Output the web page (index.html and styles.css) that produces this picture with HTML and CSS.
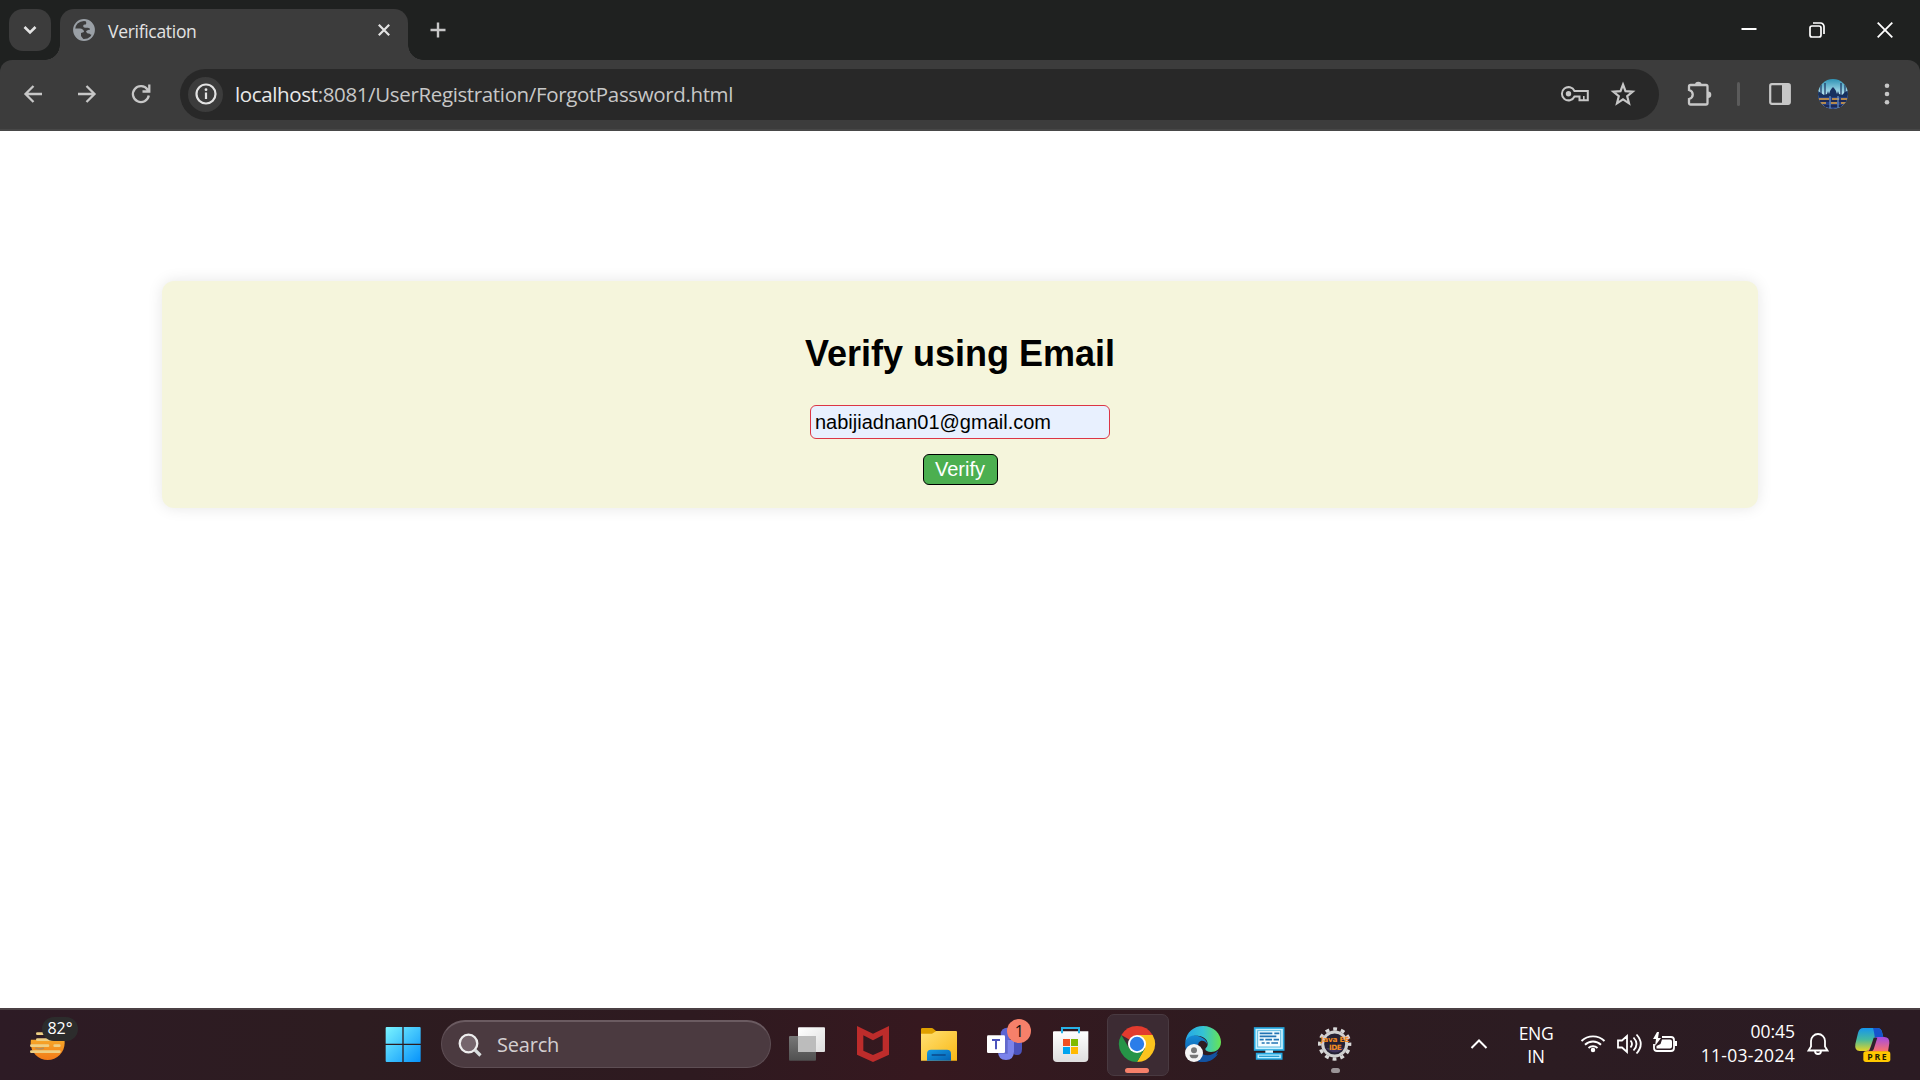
FILE: index.html
```html
<!DOCTYPE html>
<html lang="en">
<head>
<meta charset="utf-8">
<title>Verification</title>
<link rel="stylesheet" href="styles.css">
</head>
<body>
<header class="tabstrip">
  <button class="tab-search" aria-label="Search tabs"><svg width="14" height="10" viewBox="0 0 14 10"><path d="M1.500 2L7 7.500 12.500 2" fill="none" stroke="#e3e3e3" stroke-width="2.600"/></svg></button>
  <div class="tab">
    <svg class="favicon" width="22" height="22" viewBox="0 0 22 22"><circle cx="11" cy="11" r="10" fill="#3c3c3c" stroke="#9aa0a6" stroke-width="1.800"/><path d="M13 1.500l5 1.500 3 6v5.500l-3 1.500c-1-2-3-1-4-2l-1-1.500c1-2 4-1 4-2.500-1-2-3-1-6-1.500-1.500-1-1-3 1-3s1-2 1-4zM1 9.500h6c2 0 4 1.500 4 3.500l-3 1v3l3 4-5-1-4-5z" fill="#9aa0a6"/></svg>
    <span class="tab-title">Verification</span>
    <svg class="tab-close" width="12" height="12" viewBox="0 0 12 12"><path d="M.8.8l10.400 10.400M11.200.8L.8 11.200" stroke="#e3e3e3" stroke-width="2.200"/></svg>
  </div>
  <svg class="new-tab" width="16" height="16" viewBox="0 0 16 16"><path d="M8 .5v15M.5 8h15" stroke="#c7c7c7" stroke-width="2.400"/></svg>
  <div class="window-controls">
    <svg width="16" height="16" viewBox="0 0 16 16"><path d="M.5 7h15" stroke="#fff" stroke-width="2"/></svg>
    <svg width="16" height="16" viewBox="0 0 16 16" fill="none" stroke="#fff" stroke-width="1.700"><rect x="1" y="4" width="11" height="11" rx="2"/><path d="M4 1h7.500a3.500 3.500 0 0 1 3.500 3.500V12"/></svg>
    <svg width="16" height="16" viewBox="0 0 16 16"><path d="M.7.7l14.600 14.600M15.300.7L.7 15.300" stroke="#fff" stroke-width="1.800"/></svg>
  </div>
</header>
<nav class="toolbar-wrap">
  <div class="toolbar">
    <div class="nav-buttons">
      <svg width="20" height="20" viewBox="0 0 20 20" fill="none" stroke="#c7c7c7" stroke-width="2.300"><path d="M19 10H3M10.500 2L2.500 10l8 8"/></svg>
      <svg width="20" height="20" viewBox="0 0 20 20" fill="none" stroke="#c7c7c7" stroke-width="2.300"><path d="M1 10h16M9.500 2l8 8-8 8"/></svg>
      <svg width="20" height="20" viewBox="0 0 20 20" fill="none" stroke="#c7c7c7" stroke-width="2.300"><path d="M17.800 11.500A8 8 0 1 1 16.500 5.500L18 7M18.300.5v7H11.500"/></svg>
    </div>
    <div class="omnibox">
      <span class="site-info"><svg width="22" height="22" viewBox="0 0 22 22"><circle cx="11" cy="11" r="9.500" fill="none" stroke="#e3e3e3" stroke-width="2.200"/><path d="M11 9.500V16" stroke="#e3e3e3" stroke-width="2.200"/><circle cx="11" cy="6.700" r="1.400" fill="#e3e3e3"/></svg></span>
      <span class="url"><span class="host">localhost</span>:8081/UserRegistration/ForgotPassword.html</span>
      <svg class="key" width="28" height="16" viewBox="0 0 28 16"><path d="M13.500 5H26.800v9.200h-8.300v-3.700h-5A6.600 6.600 0 1 1 13.500 5z" fill="none" stroke="#c7c7c7" stroke-width="2"/><path d="M22.800 10v4" stroke="#c7c7c7" stroke-width="1.600"/><circle cx="7.500" cy="7.800" r="2.700" fill="#c7c7c7"/></svg>
      <svg class="star" width="24" height="24" viewBox="0 0 24 24"><path d="M12 2.500l2.500 6.600 7.200.5-5.500 4.600 1.800 7.100-6-3.900-6 3.900 1.800-7.100L2.300 9.600l7.200-.5z" fill="none" stroke="#c7c7c7" stroke-width="2.200"/></svg>
    </div>
    <svg class="extensions" width="26" height="26" viewBox="0 0 26 26"><path d="M2 9V5.500Q2 4 3.500 4H19q1.500 0 1.500 1.500V22q0 1.500-1.500 1.500H3.500Q2 23.500 2 22v-4c5-1.500 5-7.500 0-9z" fill="none" stroke="#c7c7c7" stroke-width="2.300"/><path d="M8 4a3.300 3.300 0 0 1 6.600 0zM21 10.500a3.300 3.300 0 0 1 0 6.600z" fill="#c7c7c7"/></svg>
    <span class="divider"></span>
    <svg class="sidepanel" width="22" height="22" viewBox="0 0 22 22"><rect x="1.200" y="1.200" width="19.600" height="19.600" rx="1.700" fill="none" stroke="#c7c7c7" stroke-width="2.200"/><path d="M13 1h8v20h-8z" fill="#c7c7c7"/></svg>
    <svg class="avatar" width="30" height="30" viewBox="0 0 30 30">
      <defs><clipPath id="round"><circle cx="15" cy="15" r="15"/></clipPath><linearGradient id="sky" x2="0" y2="1"><stop stop-color="#2f93b5"/><stop offset=".5" stop-color="#b5e3f0"/></linearGradient></defs>
      <g clip-path="url(#round)"><path d="M0 0h30v30H0z" fill="url(#sky)"/><path d="M3 18V6M7 18V4M23 18V4M27 18V6" stroke="#18315f" stroke-width="1.200"/><path d="M0 20v-8l3 2 3 2 3-1 1-3 1 3 1-3q1-2 3-4 2 2 3 4l1 3 1-3 1 3 3 1 3-3 4-2v9z" fill="#18315f"/><path d="M0 18h30v12H0z" fill="#263f80"/><path d="M1 20h10m3 0h7m2 0h6M3 24h5m5 0h6m4 0h5" stroke="#e5a33d" stroke-width="1.300"/><path d="M1 22h28M6 27h18" stroke="#1b2448" stroke-width="1.500"/><path d="M12 17v12M20 17v12" stroke="#77a5d8"/></g>
    </svg>
    <svg class="menu" width="6" height="22" viewBox="0 0 6 22" fill="#c7c7c7"><circle cx="3" cy="2.800" r="2.300"/><circle cx="3" cy="11" r="2.300"/><circle cx="3" cy="19.300" r="2.300"/></svg>
  </div>
</nav>
<main class="page">
  <form class="card">
    <h2 class="card-title">Verify using Email</h2>
    <input class="email" type="text" value="nabijiadnan01@gmail.com">
    <button class="verify" type="button">Verify</button>
  </form>
</main>
<footer class="taskbar">
  <div class="weather">
    <svg width="36" height="36" viewBox="0 0 108 108"><defs><linearGradient id="sun" x2="0" y2="1"><stop stop-color="#f9c533"/><stop offset="1" stop-color="#f27a19"/></linearGradient><clipPath id="low"><path d="M0 44h108v64H0z"/></clipPath></defs><circle cx="53" cy="54" r="51" fill="url(#sun)" clip-path="url(#low)"/><path d="M22 26h30M22 44h40M4 62h50M74 62h14M4 80h84" stroke="#eecf84" stroke-width="8" stroke-linecap="round"/><path d="M16 69q14 5 26 0" stroke="#b88d55" stroke-width="5" fill="none"/></svg>
    <span class="temperature">82°</span>
  </div>
  <div class="apps">
    <div class="app"><svg width="36" height="36" viewBox="0 0 108 108"><defs><linearGradient id="win" gradientUnits="userSpaceOnUse" x1="2" y1="3" x2="107" y2="108"><stop stop-color="#7af4ff"/><stop offset="1" stop-color="#0692fb"/></linearGradient></defs><path d="M5 3h47v50H2V6q0-3 3-3zM56 3h48q3 0 3 3v47H56zM2 57h50v51H5q-3 0-3-3zM56 57h51v48q0 3-3 3H56z" fill="url(#win)"/></svg></div>
    <div class="search">
      <svg width="24" height="24" viewBox="0 0 24 24"><circle cx="10.500" cy="10.500" r="8.800" fill="#75656c" stroke="#eee" stroke-width="2.300"/><path d="M17 17l5.500 5.500" stroke="#d9dedf" stroke-width="3.200"/></svg>
      <span class="search-label">Search</span>
    </div>
    <div class="app"><svg width="36" height="36" viewBox="0 0 108 108"><defs><linearGradient id="tv1" x2="0" y2="1"><stop stop-color="#777"/><stop offset="1" stop-color="#505050"/></linearGradient><linearGradient id="tv2" x2="1" y2="1"><stop stop-color="#fff"/><stop offset="1" stop-color="#ddd"/></linearGradient></defs><rect y="30" width="81" height="74" rx="3" fill="url(#tv1)"/><rect x="27" y="4" width="81" height="74" rx="3" fill="url(#tv2)"/><path d="M27 30h54v48H27z" fill="#bcbcbc"/></svg></div>
    <div class="app"><svg width="36" height="36" viewBox="0 0 108 108"><path fill-rule="evenodd" d="M6 0l48 23L102 0v86l-48 22L6 86zM25 28v46l29 13 29-13V28L54 43z" fill="#bd2c2b"/></svg></div>
    <div class="app"><svg width="36" height="36" viewBox="0 0 108 108"><defs><linearGradient id="folder" x2="1" y2="1"><stop stop-color="#ffe174"/><stop offset="1" stop-color="#f9b815"/></linearGradient><linearGradient id="tray" x2="1" y2="1"><stop stop-color="#169be5"/><stop offset="1" stop-color="#0461b2"/></linearGradient></defs><path d="M0 25V10q0-4 4-4h28q3 0 6 3l8 7v12z" fill="#dfa000"/><path d="M0 23h33l13-8h59q3 0 3 3v86H0z" fill="url(#folder)"/><path d="M18 104V83q0-12 12-12h48q12 0 12 12v21z" fill="url(#tray)"/><path d="M32 87h42" stroke="#0b4d91" stroke-width="5"/></svg></div>
    <div class="app"><svg width="36" height="36" viewBox="0 0 108 108"><circle cx="90" cy="36" r="13" fill="#5059c9"/><path d="M75 42h30v27q0 18-15 18T75 69z" fill="#4b53bc"/><circle cx="60" cy="24" r="19" fill="#5c65d2"/><path d="M33 42h48v34q0 26-24 26T33 76z" fill="#7b83eb"/><path d="M55 42h7v41H35z" fill="#5158b7" opacity=".6"/><rect y="28" width="54" height="53" rx="4" fill="#fff"/><path d="M15 42h24M27 42v28" stroke="#4b53bc" stroke-width="6"/><circle cx="96" cy="15" r="36" fill="#f6806a"/><text class="badge-label" x="97" y="32">1</text></svg></div>
    <div class="app"><svg width="36" height="36" viewBox="0 0 108 108"><defs><linearGradient id="bag" x2="0" y2="1"><stop stop-color="#fff"/><stop offset="1" stop-color="#dedede"/></linearGradient></defs><path d="M2 16h104v80q0 12-12 12H12Q0 108 0 96V18z" fill="url(#bag)"/><path d="M27 22V6h51v16" fill="none" stroke="#27b2e8" stroke-width="6"/><path d="M30 39h21v21H30z" fill="#f25022"/><path d="M54 39h21v21H54z" fill="#7fba00"/><path d="M30 63h21v21H30z" fill="#00a4ef"/><path d="M54 63h21v21H54z" fill="#ffb900"/></svg></div>
    <div class="app app-active"><svg width="36" height="36" viewBox="0 0 108 108"><path d="M54 54L7.200 27A54 54 0 0 1 100.800 27z" fill="#e33b2e"/><path d="M54 27h46.800A54 54 0 0 1 54 108L77.400 67.500z" fill="#fcc31e"/><path d="M30.600 67.500L7.200 27A54 54 0 0 0 54 108L77.400 67.500z" fill="#269447"/><circle cx="54" cy="54" r="27" fill="#fff"/><circle cx="54" cy="54" r="21.500" fill="#2b7de9"/></svg></div>
    <div class="app"><svg width="36" height="36" viewBox="0 0 108 108"><defs><linearGradient id="e1"><stop stop-color="#25a6e7"/><stop offset=".5" stop-color="#35c3d4"/><stop offset="1" stop-color="#66e553"/></linearGradient><linearGradient id="e2" x2="0" y2="1"><stop stop-color="#168bd5"/><stop offset="1" stop-color="#0b4ba0"/></linearGradient></defs><path d="M1 48C4 18 27 0 54 0c33 0 54 24 54 48 0 21-16 30-30 30-10 0-17-4-17-8 0-5 7-6 7-17S57 32 42 30C23 27 8 35 1 48z" fill="url(#e1)"/><path d="M1 48c8-20 26-21 37-18 19 4 29 16 29 25-3-6-9-11-16-11-15 0-22 32 6 45 17 8 32 0 42-6-12 20-31 25-46 25C20 108-3 80 1 48z" fill="url(#e2)"/><path d="M43 49c-8 12-4 27 9 35 15 8 30 4 48-11-10 27-28 35-47 35-22 0-35-36-10-59z" fill="#1353a0"/><circle cx="27" cy="81" r="27" fill="#f5f5f5"/><circle cx="27" cy="73" r="9" fill="#777"/><path d="M14 86h26q0 11-13 11T14 86z" fill="#777"/></svg></div>
    <div class="app"><svg width="36" height="36" viewBox="0 0 108 108"><rect x="11" y="6" width="87" height="66" fill="#c8f1ff" stroke="#25a7df" stroke-width="5"/><rect x="20" y="14" width="69" height="49" fill="#f3fcff" stroke="#5db9e0" stroke-width="3"/><path d="M26 22h38M70 22h15M26 31h50M26 41h12m5 0h20m5 0h16M32 51h9m5 0h10m5 0h20" stroke="#2274b4" stroke-width="5"/><path d="M43 73h23v8H43z" fill="#d9f5ff"/><path d="M17 83h75v16H17z" fill="#bceeff" stroke="#25a7df" stroke-width="5"/><path d="M24 91h61" stroke="#269dd1" stroke-width="4"/></svg></div>
    <div class="app app-running"><svg width="36" height="36" viewBox="0 0 108 108"><circle cx="53" cy="54" r="45" fill="none" stroke="#d8d8d8" stroke-width="10" stroke-dasharray="11.780 11.780" stroke-dashoffset="5.900"/><circle cx="53" cy="54" r="36" fill="#252133" stroke="#d0d0d0" stroke-width="9"/><path d="M27 66q27 27 54 0" fill="#40355e"/><text class="ide-label" x="54" y="49" textLength="86">Java EE</text><text class="ide-label" x="55" y="73" textLength="38">IDE</text></svg></div>
  </div>
  <div class="tray">
    <svg class="chevron" width="18" height="12" viewBox="0 0 18 12"><path d="M1.500 9L9 1.500 16.500 9" fill="none" stroke="#fff" stroke-width="2"/></svg>
    <div class="language"><span>ENG</span><span>IN</span></div>
    <div class="quick">
      <svg width="26" height="20" viewBox="0 0 26 20" fill="none" stroke="#fff" stroke-width="1.900"><path d="M1.500 7a16.500 16.500 0 0 1 23 0M5 10.800a11.500 11.500 0 0 1 16 0M8.500 14a6.700 6.700 0 0 1 9 0"/><circle cx="13" cy="16" r="1.300" fill="#fff"/></svg>
      <svg width="26" height="22" viewBox="0 0 26 22" fill="none" stroke="#fff" stroke-width="1.800"><path d="M2 7.500h4L11 3v16l-5-4.500H2zM14.500 7.500q3 3.500 0 7M17.500 4.500q6 6.500 0 13M20.500 1.500q8.500 9.500 0 19"/></svg>
      <svg width="26" height="22" viewBox="0 0 26 22"><path d="M10 4h9q3 0 3 3v8q0 3-3 3H5q-3 0-3-3v-4" fill="none" stroke="#fff" stroke-width="1.800"/><path d="M10 6.500h8q2 0 2 2v5q0 2-2 2H4.500V13l4-2zM22.500 8H25v5h-2.500zM5-1L1 6h3l-1 7 6-8H6l1-6z" fill="#fff"/></svg>
    </div>
    <div class="clock"><span>00:45</span><span class="date">11-03-2024</span></div>
    <svg class="bell" width="22" height="24" viewBox="0 0 22 24"><path d="M1.500 18.500l2.500-4V9a7 7 0 0 1 14 0v5.500l2.500 4zM8 19a3 3 0 0 0 6 0" fill="none" stroke="#fff" stroke-width="1.800"/></svg>
    <svg class="copilot" width="36" height="36" viewBox="0 0 108 108"><defs><linearGradient id="c1" x2="0" y2="1"><stop stop-color="#1595ee"/><stop offset=".5" stop-color="#45b9a0"/><stop offset="1" stop-color="#e8d424"/></linearGradient><linearGradient id="c2" x2="0" y2="1"><stop stop-color="#a34be5"/><stop offset="1" stop-color="#ff7466"/></linearGradient></defs><path d="M25 6h42q11 0 14 12l4 16H68q-10 0-14 14l-5 15q-4 12-16 12H14Q-2 75 1 54L9 21Q13 6 25 6z" fill="url(#c1)"/><path d="M54 6h13q11 0 14 12l4 16H68q-5 0-8 5-3-24-6-33z" fill="#1653cc"/><path d="M68 33h20q16 0 15 18l-4 26H28q12 0 17-12l11-22q3-10 12-10z" fill="url(#c2)"/><path d="M56 35h11L56 70q-2 6-8 6H40q4-3 7-13z" fill="#30212c"/><rect x="25" y="76" width="81" height="32" rx="8" fill="#ffc800"/><text class="pre-label" x="66" y="101" textLength="58">PRE</text></svg>
  </div>
</footer>
</body>
</html>
```
FILE: styles.css
```css
* { box-sizing: border-box; }
body {
  margin: 0;
  width: 1920px;
  height: 1080px;
  overflow: hidden;
  display: flex;
  flex-direction: column;
  background: #fff;
  font-family: "Open Sans", "Noto Sans", sans-serif;
}
svg { display: block; flex: none; overflow: visible; }

/* Tab strip */
.tabstrip {
  height: 60px;
  flex: none;
  display: flex;
  align-items: flex-start;
  padding: 9px 14px 0 9px;
  background: #1f2120;
}
.tab-search {
  width: 42px;
  height: 42px;
  padding: 0;
  border: 0;
  border-radius: 14px;
  background: #3c3c3c;
  display: flex;
  align-items: center;
  justify-content: center;
}
.tab {
  position: relative;
  width: 348px;
  height: 51px;
  margin-left: 9px;
  padding: 0 18px 9px 13px;
  display: flex;
  align-items: center;
  border-radius: 14px 14px 0 0;
  background: #3c3c3c;
}
.tab::before, .tab::after {
  content: "";
  position: absolute;
  bottom: 0;
  width: 15px;
  height: 15px;
}
.tab::before { left: -15px; background: radial-gradient(circle at 0 0, transparent 14.5px, #3c3c3c 15px); }
.tab::after { right: -15px; background: radial-gradient(circle at 100% 0, transparent 14.5px, #3c3c3c 15px); }
.tab-title { margin: 2px auto 0 13px; font-size: 17.5px; letter-spacing: -.3px; color: #e3e3e3; }
.new-tab { margin: 13px 0 0 22px; }
.window-controls { display: flex; gap: 52px; margin: 13px 13px 0 auto; }

/* Toolbar */
.toolbar-wrap { height: 71px; flex: none; background: #1f2120; }
.toolbar {
  height: 71px;
  display: flex;
  align-items: center;
  padding: 0 30px 1px 23px;
  border-bottom: 2px solid #474747;
  border-radius: 12px 12px 0 0;
  background: #3c3c3c;
}
.nav-buttons { display: flex; gap: 34px; }
.omnibox {
  width: 1479px;
  height: 51px;
  margin: 0 0 0 29px;
  padding: 0 24px 0 8px;
  display: flex;
  align-items: center;
  border-radius: 26px;
  background: #282828;
}
.site-info {
  width: 35px;
  height: 35px;
  border-radius: 50%;
  background: #3c3c3c;
  display: flex;
  align-items: center;
  justify-content: center;
}
.url { margin: 0 auto 0 12px; font-size: 20.5px; letter-spacing: -.36px; color: #c7c7c7; white-space: nowrap; }
.host { color: #e8e8e8; }
.star { margin-left: 22px; }
.extensions { margin-left: 28px; }
.divider { width: 3px; height: 24px; margin-left: 24px; border-radius: 2px; background: #5b5b5b; }
.sidepanel { margin-left: 29px; }
.avatar { margin-left: 27px; }
.menu { margin-left: auto; }

/* Page content */
.page { flex: 1; padding: 150px 162px 0; }
.card {
  height: 227px;
  padding-top: 52px;
  display: flex;
  flex-direction: column;
  align-items: center;
  border-radius: 12px;
  background: #f5f5dc;
  box-shadow: 0 0 15px rgba(0, 0, 0, .1);
  font-family: "Liberation Sans", Arial, sans-serif;
}
.card-title { margin: 0 0 31px; font-size: 36px; line-height: 41px; }
.email {
  width: 300px;
  height: 34px;
  padding: 1px 4px;
  border: 1px solid #dc3545;
  border-radius: 6px;
  background: #e8f0fe;
  color: #000;
  font: 20px "Liberation Sans", Arial, sans-serif;
}
.verify {
  width: 75px;
  height: 31px;
  margin-top: 15px;
  padding: 0;
  border: 1px solid #000;
  border-radius: 6px;
  background: #4caf50;
  color: #fff;
  font: 20px/27px "Liberation Sans", Arial, sans-serif;
}

/* Taskbar */
.taskbar {
  height: 72px;
  flex: none;
  display: flex;
  align-items: center;
  border-top: 2px solid #4b4044;
  background: linear-gradient(90deg, #2d1b25, #2d1c20 18%, #2e1a20 36%, #36181f 48%, #2e1b20 65%, #2c1c22 80%, #2b1b23);
  color: #fff;
}
.weather { position: relative; width: 370px; padding: 0 0 4px 30px; }
.temperature {
  position: absolute;
  left: 42px;
  top: -8px;
  width: 36px;
  height: 24px;
  border-radius: 12px;
  background: #2c2c2c;
  text-align: center;
  font-size: 16px;
  line-height: 23px;
}
.apps { display: flex; align-items: center; }
.app {
  position: relative;
  width: 66px;
  height: 70px;
  padding-bottom: 2px;
  display: flex;
  align-items: center;
  justify-content: center;
}
.search {
  width: 330px;
  height: 48px;
  margin: 0 3px 2px 5px;
  padding-left: 16px;
  display: flex;
  align-items: center;
  border: 1px solid #5e4e54;
  border-top: 2px solid #6b5b61;
  border-radius: 24px;
  background: #4b3a40;
}
.search-label { margin-left: 15px; font-size: 20px; letter-spacing: -.2px; color: #d4cfd1; }
.app-active::before {
  content: "";
  position: absolute;
  left: 3px;
  top: 4px;
  width: 60px;
  height: 60px;
  border: 1px solid #493a41;
  border-radius: 7px;
  background: #3c2b33;
}
.app-active svg { position: relative; }
.app-active::after, .app-running::after {
  content: "";
  position: absolute;
  bottom: 7px;
  width: 24px;
  height: 5px;
  border-radius: 3px;
  background: #f6806a;
}
.app-running::after { width: 9px; background: #9b9497; }
.badge-label { font: 48px "Open Sans", sans-serif; text-anchor: middle; fill: #111; }
.ide-label { font: bold 22px "DejaVu Sans", sans-serif; text-anchor: middle; fill: #f28b20; }
.pre-label { font: bold 26px "Open Sans", sans-serif; text-anchor: middle; fill: #251d00; }
.tray { margin-left: auto; padding-right: 29px; display: flex; align-items: center; }
.language { width: 66px; margin-left: 15px; }
.language, .clock { display: flex; flex-direction: column; font-size: 17.5px; line-height: 23px; padding-bottom: 1px; }
.language { align-items: center; letter-spacing: -.3px; }
.clock { align-items: flex-end; width: 112px; line-height: 24px; padding-bottom: 4px; white-space: nowrap; }
.date { letter-spacing: .3px; }
.quick { width: 108px; margin-left: 6px; padding-bottom: 2px; display: flex; align-items: center; justify-content: space-around; }
.bell { margin: 0 0 2px 12px; }
.copilot { margin: 0 0 2px 26px; }
```
